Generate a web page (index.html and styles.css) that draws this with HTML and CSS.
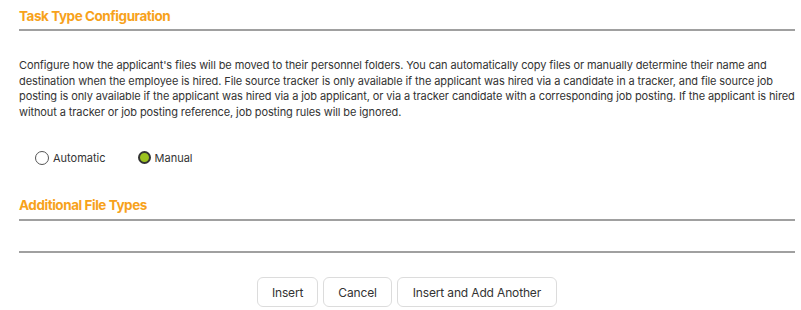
FILE: index.html
```
<!DOCTYPE html>
<html>
<head>
<meta charset="utf-8">
<link rel="stylesheet" href="styles.css">
</head>
<body>
<div class="page">
  <h2 class="section-title">Task Type Configuration</h2>
  <p class="desc">Configure how the applicant's files will be moved to their personnel folders. You can automatically copy files or manually determine their name and destination when the employee is hired. File source tracker is only available if the applicant was hired via a candidate in a tracker, and file source job posting is only available if the applicant was hired via a job applicant, or via a tracker candidate with a corresponding job posting. If the applicant is hired without a tracker or job posting reference, job posting rules will be ignored.</p>
  <div class="radios">
    <label class="radio"><span class="dot"></span>Automatic</label>
    <label class="radio checked"><span class="dot"></span>Manual</label>
  </div>
  <h2 class="section-title second">Additional File Types</h2>
  <div class="empty-list"></div>
  <div class="actions">
    <button class="btn">Insert</button>
    <button class="btn">Cancel</button>
    <button class="btn">Insert and Add Another</button>
  </div>
</div>
</body>
</html>
```
FILE: styles.css
```
html, body { margin: 0; padding: 0; background: #fff; }
body { font-family: Inter, "Open Sans", sans-serif; color: #333; }
.page { padding: 0 6px 0 19px; }
.section-title {
  margin: 0;
  font-size: 13.5px;
  font-weight: 700;
  color: #f7a21b;
  letter-spacing: -0.45px;
  padding-top: 7px;
  height: 22px;
  border-bottom: 2px solid #a0a0a0;
  line-height: 18px;
}
.section-title.second { padding-top: 0; height: 23px; }
.desc {
  margin: 27px 0 0 0;
  font-size: 11px;
  line-height: 15.5px;
  letter-spacing: -0.1px;
  color: #333;
}
.radios { display: flex; gap: 32px; padding: 29px 0 0 16px; height: 76px; box-sizing: border-box; }
.radio { display: flex; align-items: center; gap: 4px; font-size: 11px; height: 17px; color: #333; }
.dot {
  width: 12px; height: 12px; border-radius: 50%;
  border: 1px solid #555; box-sizing: content-box; background: #fff;
}
.checked .dot { width: 9px; height: 9px; border: 2.5px solid #333; background: #9bc21f; }
.empty-list { height: 30px; border-bottom: 2px solid #a0a0a0; }
.actions { display: flex; justify-content: center; gap: 5px; padding: 24px 0 0 0; }
.btn {
  font-family: inherit;
  font-size: 12px;
  color: #333;
  background: #fff;
  border: 1px solid #dcdcdc;
  border-radius: 6px;
  height: 30px;
  padding: 0 14px;
  letter-spacing: -0.15px;
}
.btn:last-child { padding: 0 15px; }
```
